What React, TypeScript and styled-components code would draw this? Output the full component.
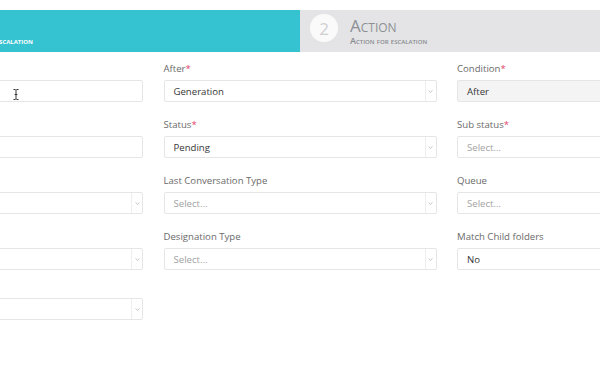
import React from "react";
import styled, { createGlobalStyle } from "styled-components";

const Global = createGlobalStyle`
  html, body { margin: 0; padding: 0; background: #ffffff; }
  body { width: 600px; height: 377px; overflow: hidden; font-family: "Open Sans", "Liberation Sans", sans-serif; }
  * { box-sizing: border-box; }
`;

const Page = styled.div`
  width: 600px;
  height: 377px;
  overflow: hidden;
  padding-top: 10px;
`;

const Stepper = styled.div`
  display: flex;
  height: 42px;
  width: 600px;
`;

const Step = styled.div<{ $active?: boolean }>`
  display: flex;
  align-items: center;
  height: 100%;
  overflow: hidden;
  background: ${(p) => (p.$active ? "#35c2d1" : "#e4e4e6")};
  flex: ${(p) => (p.$active ? "0 0 300px" : "1 1 auto")};
  padding-left: ${(p) => (p.$active ? "0" : "10px")};
`;

const Circle = styled.div`
  width: 28px;
  height: 28px;
  border-radius: 50%;
  background: #fafafa;
  color: #cfd0d2;
  font-size: 17px;
  display: flex;
  align-items: center;
  justify-content: center;
  margin-top: -6px;
  flex: none;
`;

const StepText = styled.div`
  display: flex;
  flex-direction: column;
  align-self: flex-start;
  gap: 2px;
  margin-left: 12px;
  padding-top: 7px;
  white-space: nowrap;
  flex: none;
`;

const ClippedText = styled.div`
  display: flex;
  flex-direction: column;
  align-items: flex-end;
  align-self: flex-end;
  width: 33px;
  padding-bottom: 6px;
  white-space: nowrap;
  flex: none;
`;

const StepTitle = styled.div`
  font-variant: small-caps;
  font-size: 17px;
  line-height: 16px;
  color: #8c9095;
  height: 16px;
  padding-top: 1px;
`;

const StepSub = styled.div<{ $light?: boolean }>`
  font-variant: small-caps;
  font-size: 9px;
  line-height: 11px;
  font-weight: ${(p) => (p.$light ? 700 : 600)};
  color: ${(p) => (p.$light ? "#ffffff" : "#868a8f")};
`;

const Form = styled.div`
  display: grid;
  grid-template-columns: 273px 273px 273px;
  column-gap: 20.5px;
  margin-left: -130px;
  padding-top: 10px;
`;

const Column = styled.div`
  display: flex;
  flex-direction: column;
  gap: 16px;
`;

const FieldBox = styled.div<{ $shift?: number }>`
  display: flex;
  flex-direction: column;
  gap: 4px;
  margin-top: ${(p) => p.$shift ?? 0}px;
`;

const Label = styled.div`
  font-size: 9.6px;
  line-height: 14px;
  height: 14px;
  color: #6a6a6a;
  white-space: nowrap;
`;

const Req = styled.span`
  color: #e0476a;
`;

const Control = styled.div<{ $disabled?: boolean }>`
  position: relative;
  display: flex;
  align-items: stretch;
  height: 22px;
  border: 1px solid #e6e6e6;
  border-radius: 2px;
  background: ${(p) => (p.$disabled ? "#f4f4f4" : "#ffffff")};
`;

const Value = styled.div<{ $placeholder?: boolean }>`
  flex: 1;
  display: flex;
  align-items: center;
  padding-left: 9px;
  font-size: 9.6px;
  color: ${(p) => (p.$placeholder ? "#a2a2a2" : "#363636")};
  white-space: nowrap;
`;

const Arrow = styled.div`
  width: 11px;
  flex: none;
  border-left: 1px solid #eeeeee;
  display: flex;
  align-items: center;
  justify-content: center;
`;

const Cursor = styled.svg`
  position: absolute;
  left: 142px;
  top: 8px;
`;

type FieldProps = {
  label?: string;
  required?: boolean;
  value?: string;
  placeholder?: string;
  select?: boolean;
  disabled?: boolean;
  shift?: number;
  cursor?: boolean;
};

const Chevron = () => (
  <svg width="5" height="3" viewBox="0 0 5 3">
    <path d="M0.5 0.5 L2.5 2.3 L4.5 0.5" fill="none" stroke="#b8b8b8" strokeWidth="0.8" />
  </svg>
);

const Field = ({ label, required, value, placeholder, select, disabled, shift, cursor }: FieldProps) => (
  <FieldBox $shift={shift}>
    <Label>
      {label}
      {required && <Req>*</Req>}
    </Label>
    <Control $disabled={disabled}>
      <Value $placeholder={!value}>{value || placeholder}</Value>
      {select && (
        <Arrow>
          <Chevron />
        </Arrow>
      )}
      {cursor && (
        <Cursor width="6" height="11" viewBox="0 0 6 11">
          <path d="M0.5 0.5 H2.3 L3 1.3 L3.7 0.5 H5.5 M3 1.3 V9.7 M0.5 10.5 H2.3 L3 9.7 L3.7 10.5 H5.5 M1.6 5.5 H4.4" fill="none" stroke="#222" strokeWidth="0.9" />
        </Cursor>
      )}
    </Control>
  </FieldBox>
);

export default function App() {
  return (
    <Page>
      <Global />
      <Stepper>
        <Step $active>
          <ClippedText>
            <StepSub $light>Condition for escalation</StepSub>
          </ClippedText>
        </Step>
        <Step>
          <Circle>2</Circle>
          <StepText>
            <StepTitle>Action</StepTitle>
            <StepSub>Action for escalation</StepSub>
          </StepText>
        </Step>
      </Stepper>
      <Form>
        <Column>
          <Field label="Name" required cursor />
          <Field label="Description" />
          <Field label="Folder" select />
          <Field label="Rule" select />
          <Field label="Priority" select shift={-6} />
        </Column>
        <Column>
          <Field label="After" required value="Generation" select />
          <Field label="Status" required value="Pending" select />
          <Field label="Last Conversation Type" placeholder="Select..." select />
          <Field label="Designation Type" placeholder="Select..." select />
        </Column>
        <Column>
          <Field label="Condition" required value="After" disabled select />
          <Field label="Sub status" required placeholder="Select..." select />
          <Field label="Queue" placeholder="Select..." select />
          <Field label="Match Child folders" value="No" select />
        </Column>
      </Form>
    </Page>
  );
}
